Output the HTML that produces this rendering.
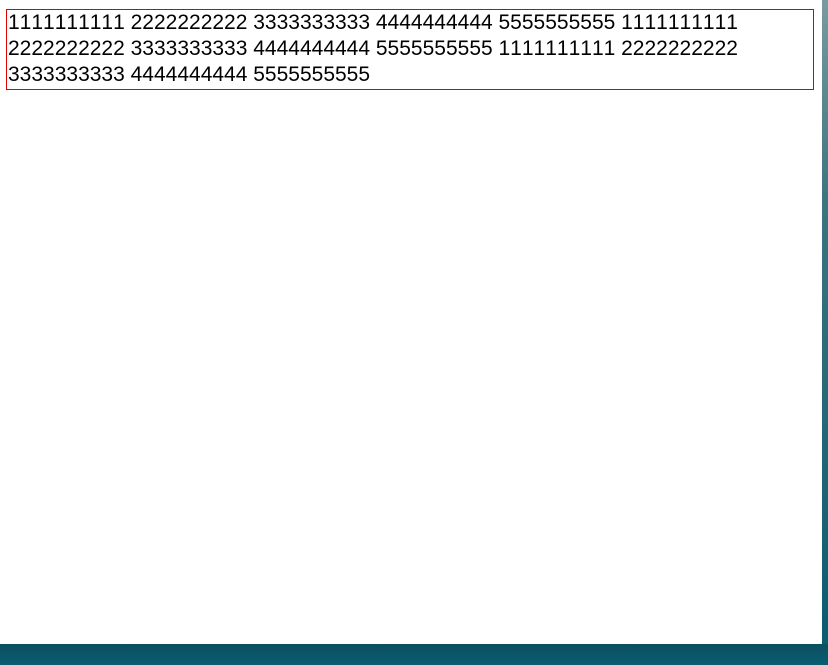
<!DOCTYPE html>
<html><head><meta charset="utf-8"><style>
html,body{margin:0;padding:0;}
body{width:828px;height:665px;background:#0a5a6e;position:relative;overflow:hidden;}
.win{position:absolute;left:0;top:0;width:822px;height:644px;background:#fff;}
.shadow{position:absolute;left:0;top:644px;width:828px;height:21px;background:linear-gradient(#0b4f60,#0a5d70);}
.rs{position:absolute;left:822px;top:0;width:6px;height:665px;background:linear-gradient(#7a9aa0,#3d7480 30%,#0a5a6e);}
.box{position:absolute;left:6px;top:9px;width:806px;height:79px;border:1px solid #e00000;}
.t{position:absolute;left:8px;top:10px;font:21px/26px "Liberation Sans",sans-serif;color:#000;white-space:nowrap;font-kerning:none;font-feature-settings:"kern" 0;}
</style></head><body>
<div class="rs"></div><div class="shadow"></div>
<div class="win"><div class="box"></div>
<div class="t">1111111111 2222222222 3333333333 4444444444 5555555555 1111111111<br>2222222222 3333333333 4444444444 5555555555 1111111111 2222222222<br>3333333333 4444444444 5555555555</div>
</div>
</body></html>
